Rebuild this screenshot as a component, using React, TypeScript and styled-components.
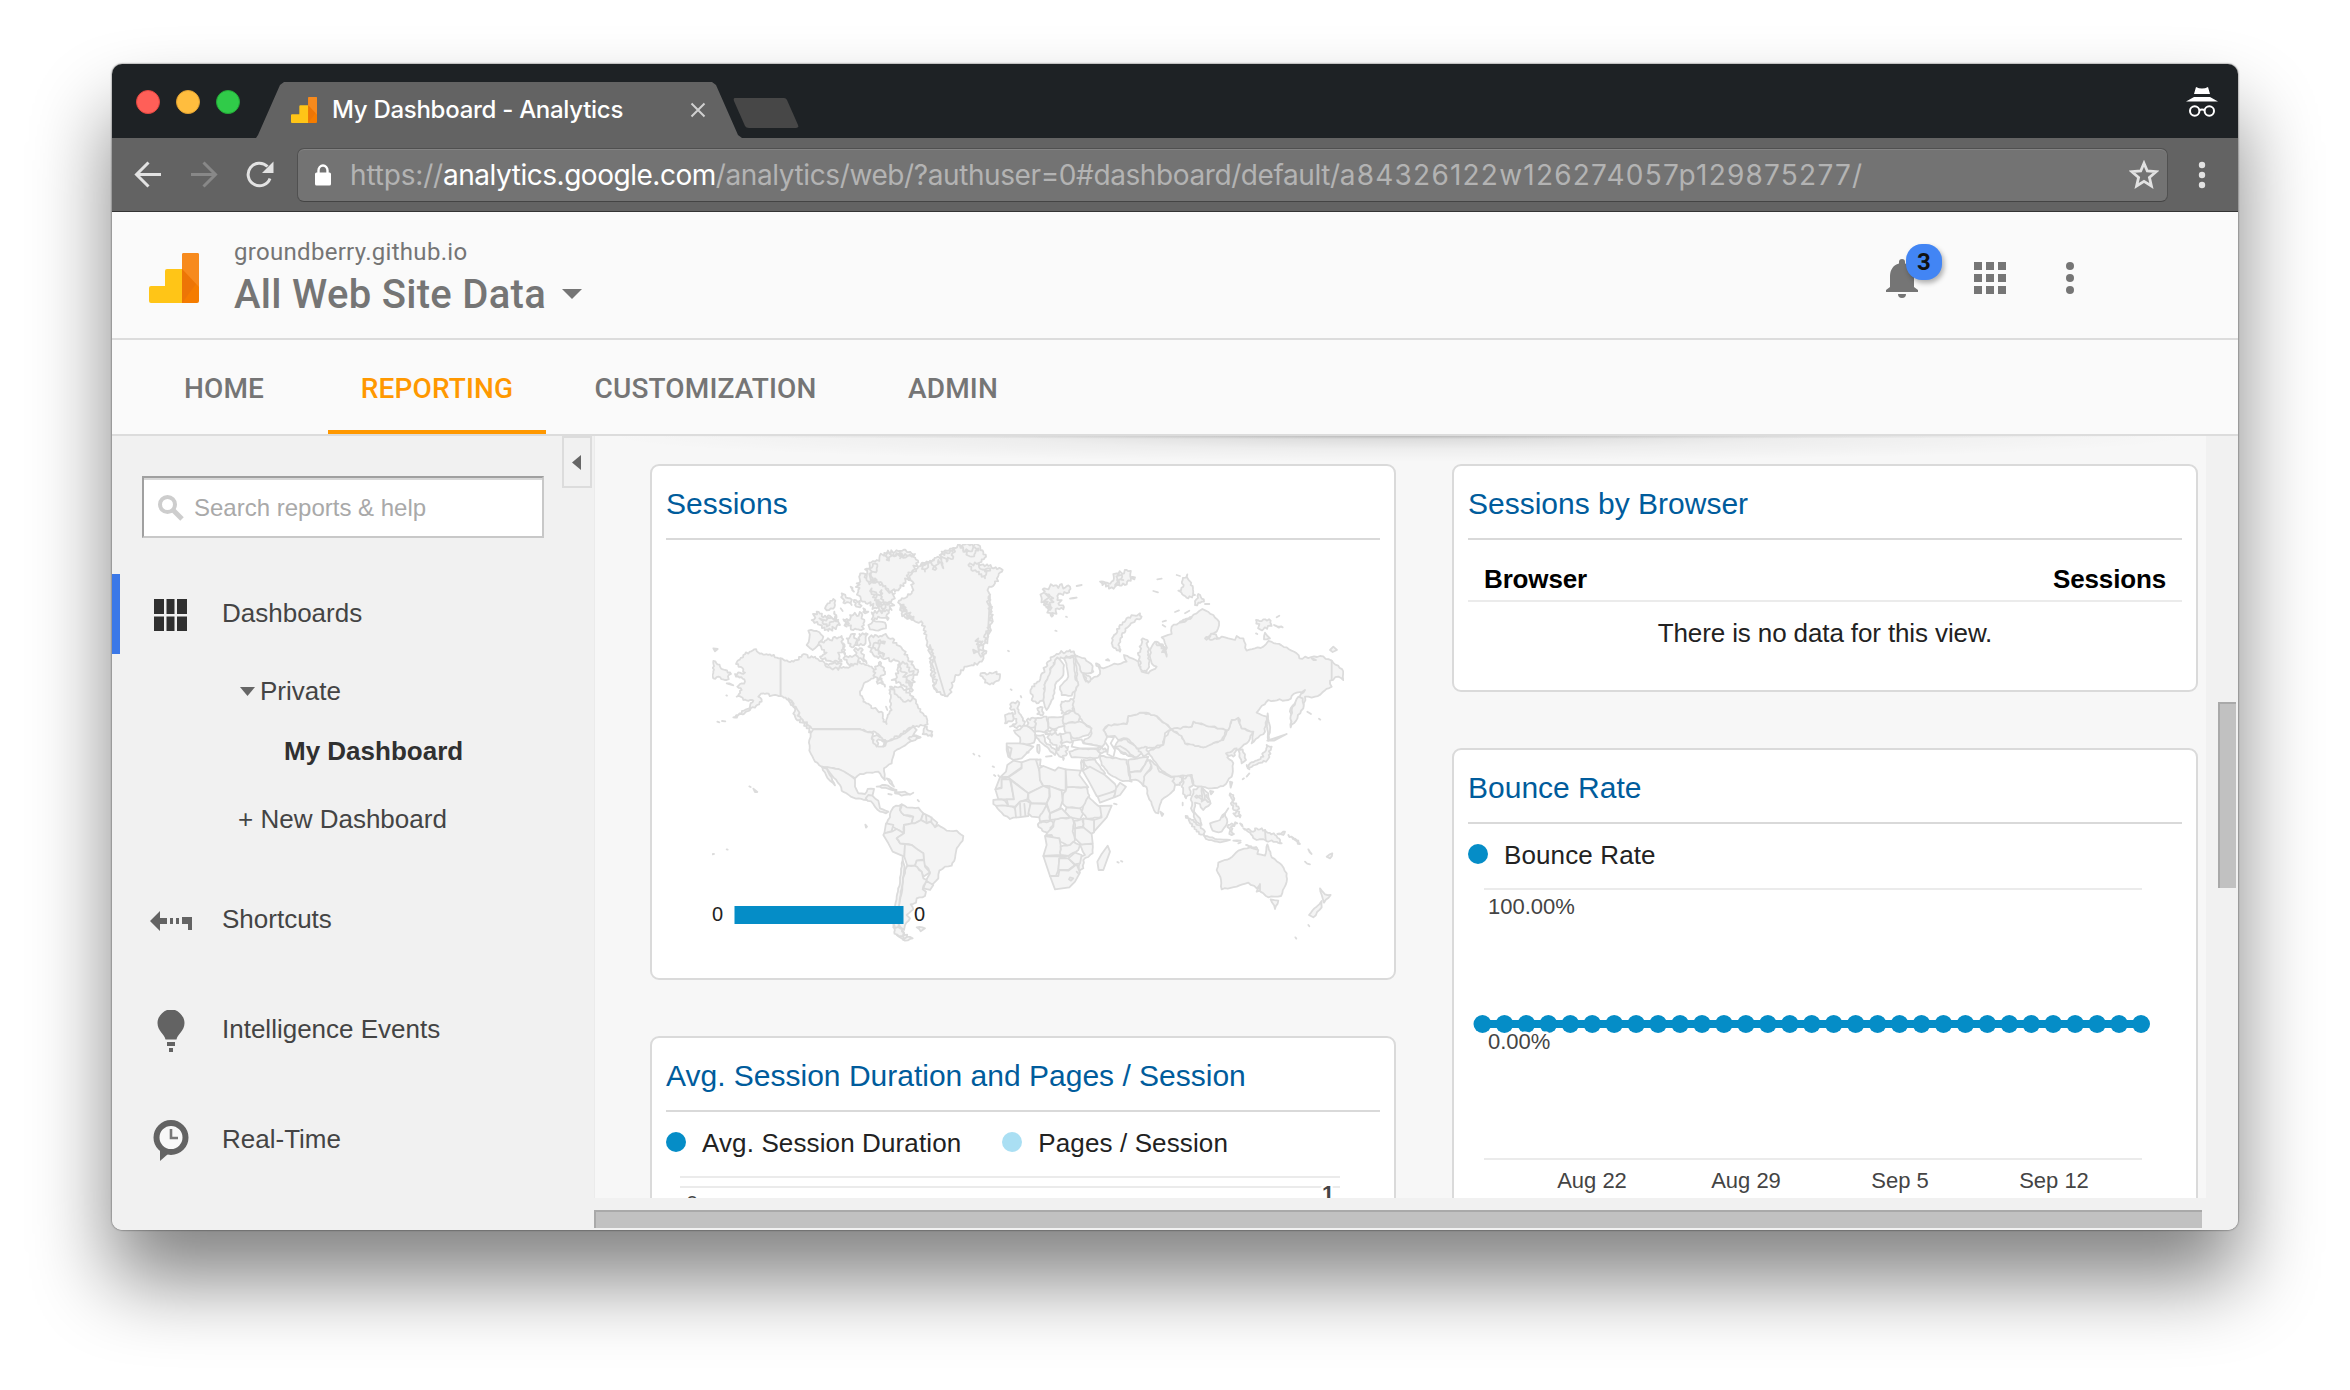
import React from 'react';
import styled, { createGlobalStyle } from 'styled-components';

const Global = createGlobalStyle`
  * { box-sizing: border-box; }
  html, body { margin: 0; padding: 0; background: #fff; }
  body { font-family: "Liberation Sans", Arial, sans-serif; overflow: hidden; }
  svg { display: block; flex: none; }
`;

const Desktop = styled.div`
  width: 2350px;
  height: 1390px;
  padding: 64px 112px;
  background: #fff;
`;

const BrowserWindow = styled.div`
  display: flex;
  flex-direction: column;
  width: 2126px;
  height: 1166px;
  border-radius: 10px;
  overflow: hidden;
  background: #fafafa;
  box-shadow: 0 0 2px rgba(0, 0, 0, 0.75), 0 50px 80px rgba(0, 0, 0, 0.49);
`;

/* ---------- browser chrome ---------- */

const TabStrip = styled.div`
  display: flex;
  height: 74px;
  flex: none;
  background: #1e2225;
  padding: 18px 20px 0 24px;
`;

const Lights = styled.div`
  display: flex;
  gap: 16px;
  padding-top: 8px;
  width: 120px;
`;

const Light = styled.span<{ $color: string; $edge: string }>`
  width: 24px;
  height: 24px;
  border-radius: 50%;
  background: ${(p) => p.$color};
  border: 1px solid ${(p) => p.$edge};
`;

const Tab = styled.div`
  display: flex;
  align-items: flex-start;
  width: 486px;
  height: 56px;
  padding: 15px 0 0 35px;
  background: #636363;
  clip-path: polygon(0 100%, 2px 53px, 24px 3px, 28px 0, 456px 0, 460px 3px, 482px 53px, 486px 100%);
`;

const TabTitle = styled.span`
  width: 373px;
  padding-left: 15px;
  font: 500 24px/26px Inter, sans-serif;
  letter-spacing: -0.28px;
  color: #fff;
  white-space: nowrap;
`;

const TabClose = styled.svg`
  margin-top: 5px;
`;

const NewTab = styled.svg`
  margin: 16px 0 0 -9px;
`;

const Incognito = styled.svg`
  margin: 4px 0 0 auto;
`;

const Toolbar = styled.div`
  display: flex;
  align-items: center;
  height: 74px;
  flex: none;
  padding: 0 32px 0 21px;
  background: #636363;
  border-bottom: 1px solid #333;
`;

const ToolIcon = styled.svg`
  margin-right: 26px;
`;

const AddressBar = styled.div`
  display: flex;
  align-items: center;
  width: 1871px;
  height: 54px;
  margin: 0 30px 0 -4px;
  padding: 0 8px 0 17px;
  border: 1px solid #505050;
  border-bottom-color: #444;
  border-radius: 7px;
  background: #737373;
  box-shadow: inset 0 1px #838383;
`;

const Url = styled.div`
  flex: 1;
  margin-left: 19px;
  font: 400 28px/34px Inter, sans-serif;
  letter-spacing: -0.17px;
  color: #b3b3b3;
  white-space: nowrap;
`;

const Host = styled.span`
  letter-spacing: -0.47px;
  color: #fff;
`;

const Path = styled.span`
  letter-spacing: -0.4px;
`;

const ViewId = styled.span`
  letter-spacing: 1.22px;
`;

/* ---------- analytics header ---------- */

const Header = styled.header`
  display: flex;
  align-items: flex-start;
  height: 128px;
  flex: none;
  padding: 41px 164px 0 37px;
  background: #fafafa;
  border-bottom: 2px solid #dcdcdc;
`;

const Property = styled.div`
  flex: 1;
  margin: -17px 0 0 35px;
  font-family: Roboto, sans-serif;
  color: #757575;
`;

const PropertyName = styled.div`
  font-size: 24px;
  line-height: 32px;
  letter-spacing: 0.3px;
`;

const ViewName = styled.div`
  display: flex;
  align-items: center;
  font-weight: 500;
  font-size: 40px;
  line-height: 54px;
  gap: 16px;
  letter-spacing: 0.3px;
`;

const HeaderActions = styled.div`
  display: flex;
  align-items: flex-start;
  padding-top: 6px;
`;

const BellButton = styled.div`
  position: relative;
  width: 88px;
`;

const Badge = styled.span`
  position: absolute;
  left: 20px;
  top: -15px;
  width: 36px;
  height: 36px;
  border-radius: 16px;
  background: #4285f4;
  box-shadow: 2px 3px 5px rgba(0, 0, 0, 0.3);
  font: 700 24px/36px Roboto, sans-serif;
  text-align: center;
  color: #111;
`;

const Nav = styled.nav`
  display: flex;
  height: 96px;
  flex: none;
  padding-left: 8px;
  background: #fafafa;
  border-bottom: 2px solid #dcdcdc;
`;

const NavTab = styled.a<{ $width: number; $active?: boolean }>`
  width: ${(p) => p.$width}px;
  height: 94px;
  padding-top: 30px;
  border-bottom: 4px solid ${(p) => (p.$active ? '#ff9800' : 'transparent')};
  color: ${(p) => (p.$active ? '#ff9800' : '#757575')};
  font: 500 28px/37px Roboto, sans-serif;
  letter-spacing: 0.15px;
  text-align: center;
`;

/* ---------- sidebar ---------- */

const Body = styled.div`
  display: flex;
  flex: 1;
  min-height: 0;
`;

const Sidebar = styled.aside`
  position: relative;
  width: 482px;
  background: #f1f1f1;
  padding-top: 40px;
`;

const Collapse = styled.div`
  position: absolute;
  right: 2px;
  top: 0;
  display: flex;
  align-items: center;
  justify-content: center;
  width: 30px;
  height: 52px;
  padding-right: 2px;
  border: 2px solid #dcdcdc;
`;

const Search = styled.div`
  display: flex;
  align-items: center;
  width: 402px;
  height: 62px;
  margin: 0 0 36px 30px;
  padding: 2px 0 0 14px;
  gap: 10px;
  background: #fff;
  border: 2px solid #c8c8c8;
  border-top-color: #a0a0a0;
  border-left-color: #a0a0a0;
  box-shadow: inset 0 2px #d8d8d8;
  font-size: 24px;
  color: #a9a9a9;
`;

const Item = styled.div<{ $height: number; $active?: boolean }>`
  display: flex;
  align-items: center;
  height: ${(p) => p.$height}px;
  padding-bottom: ${(p) => (p.$active ? 2 : 0)}px;
  border-left: 8px solid ${(p) => (p.$active ? '#3b78e7' : 'transparent')};
  font-size: 26px;
  line-height: 30px;
  color: #444;
`;

const ItemIcon = styled.span`
  display: flex;
  justify-content: center;
  width: 44px;
  margin: 4px 29px 0 29px;
`;

const SubItem = styled(Item)<{ $indent: number; $bold?: boolean }>`
  padding-left: ${(p) => p.$indent}px;
  font-weight: ${(p) => (p.$bold ? 700 : 400)};
  color: ${(p) => (p.$bold ? '#303030' : '#444')};
  gap: 5px;
`;

/* ---------- dashboard ---------- */

const Main = styled.main`
  display: grid;
  grid-template-columns: 1612px 32px;
  grid-template-rows: 762px 32px;
`;

const Viewport = styled.div`
  display: flex;
  gap: 56px;
  padding: 28px 8px 0 55px;
  border-left: 1px solid #ebebeb;
  overflow: hidden;
  background:
    radial-gradient(ellipse 780px 3px at 50% 0, rgba(0, 0, 0, 0.14), transparent) no-repeat,
    radial-gradient(ellipse 800px 26px at 50% 0, rgba(0, 0, 0, 0.13), rgba(0, 0, 0, 0.04) 50%, transparent) no-repeat,
    #f7f7f7;
`;

const Column = styled.div`
  display: flex;
  flex-direction: column;
  gap: 56px;
  width: 746px;
`;

const Card = styled.section<{ $height: number }>`
  flex: none;
  height: ${(p) => p.$height}px;
  padding: 0 14px;
  background: #fff;
  border: 2px solid #dadada;
  border-radius: 9px;
`;

const CardTitle = styled.h2`
  margin: 0;
  height: 74px;
  padding-top: 3px;
  border-bottom: 2px solid #d9d9d9;
  font-weight: 400;
  font-size: 30px;
  line-height: 70px;
  color: #005c9c;
`;

const TableHead = styled.div`
  display: flex;
  justify-content: space-between;
  height: 62px;
  padding: 24px 16px 0;
  border-bottom: 2px solid #ebebeb;
  font-weight: 700;
  font-size: 26px;
  line-height: 30px;
  letter-spacing: -0.15px;
  color: #000;
`;

const Empty = styled.div`
  padding-top: 16px;
  font-size: 26px;
  line-height: 30px;
  letter-spacing: -0.12px;
  text-align: center;
  color: #222;
`;

const Legend = styled.div`
  display: flex;
  align-items: center;
  height: 62px;
  gap: 41px;
  font-size: 26px;
  letter-spacing: 0.12px;
  color: #222;
`;

const LegendEntry = styled.span`
  display: flex;
  align-items: center;
  gap: 16px;
`;

const Dot = styled.i<{ $color: string }>`
  width: 20px;
  height: 20px;
  margin-top: -2px;
  border-radius: 50%;
  background: ${(p) => p.$color};
`;

const ScrollTrack = styled.div<{ $side: 'right' | 'bottom' }>`
  background: #f1f1f1;
  ${(p) => (p.$side === 'right' ? 'padding: 266px 2px 0 12px;' : 'padding: 12px 36px 2px 0; grid-column: 1 / -1;')}
`;

const ScrollThumb = styled.div<{ $height: number }>`
  height: ${(p) => p.$height}px;
  background: #c1c1c1;
  border-top: 2px solid #a9a9a9;
  border-left: 2px solid #a9a9a9;
`;

const Chart = styled.svg`
  font-family: "Liberation Sans", Arial, sans-serif;
`;

/* ---------- world map ---------- */

type Shape = [string, number?];

// Outlines in thirds of a pixel; the second value is the roughness of the coast.
const WEST: Shape[] = [
  ['162,358 185,370 210,373 242,385 242,498 215,497 190,490 175,500 185,515 150,540 105,563 100,562 150,530 160,512 150,510 130,510 122,500 110,500 125,480 112,470 135,455 133,448 108,440 105,432 135,428 130,418 108,402 130,375', 3],
  ['40,393 60,410 75,420 93,432 80,450 55,440 40,445', 3],
  ['40,355 53,357 45,364', 2], ['80,460 100,466 88,460'], ['52,575 58,577'], ['66,573 76,574'],
  ['242,385 265,395 290,390 312,372 330,383 345,380 375,400 410,410 450,410 470,395 490,400 515,410 530,440 510,450 490,465 480,490 490,515 520,535 548,548 550,575 560,582 563,555 575,540 570,510 568,480 590,475 612,485 620,510 640,500 655,535 680,565 683,583 650,588 625,595 600,615 560,635 545,632 530,610 510,605 480,597 340,597 325,590 295,560 285,535 265,510 242,498', 3],
  ['265,505 290,535 300,560 330,590 335,608 320,595 300,570 285,560 280,530', 5],
  ['340,598 480,598 520,610 515,625 535,650 548,650 560,635 600,620 640,590 650,600 640,615 660,622 630,635 600,655 583,665 575,700 552,715 555,750 545,740 535,725 510,728 480,732 465,745 440,730 415,717 365,710 345,695 328,662 328,630 332,610', 1.5],
  ['518,620 530,615 555,630 550,650 560,635 535,628 530,650 520,640', 3],
  ['365,710 415,717 440,730 465,748 465,770 475,790 495,792 503,777 522,777 517,797 500,810 460,803 425,782 420,765 395,735 380,715', 1.2],
  ['367,712 380,716 395,742 405,766 390,752 378,735', 2],
  ['497,805 505,795 517,797 535,812 540,835 565,845 558,850 540,845 520,822', 2],
  ['530,770 555,765 590,780 570,778', 2], ['585,785 615,785 630,793 605,797 585,790', 2], ['565,792 575,794'], ['640,788 630,794'],
  ['560,745 575,755 582,770 570,760', 2], ['653,810 657,814'],
  ['570,862 572,845 580,832 605,823 600,840 612,855 640,860 635,880 612,885 612,908 590,898 560,880', 1.5],
  ['605,823 620,832 655,833 670,850 663,870 645,880 635,880 640,860 612,855 600,840', 1.5],
  ['670,850 690,860 712,878 705,894 690,875 680,880 663,870', 1], ['678,857 680,878'], ['695,862 694,876'],
  ['558,880 580,885 575,903 553,910', 1],
  ['553,910 575,905 590,897 612,910 590,925 600,940 615,942 613,980 578,965 565,940 550,915', 1],
  ['612,885 635,880 645,880 663,870 680,880 692,875 705,892 715,885 740,902 770,902 790,918 788,932 770,955 765,985 755,1007 735,1010 718,1022 715,1045 695,1065 678,1052 690,1030 685,1015 672,1005 670,970 655,960 635,945 615,942 600,940 590,925 612,910', 1.2],
  ['615,942 635,945 655,960 670,970 672,988 650,992 645,1007 622,1007 613,980', 1],
  ['650,992 672,990 675,1010 690,1027 670,1040 665,1025 645,1007', 1],
  ['678,1052 700,1065 690,1080 670,1075', 1],
  ['622,1007 645,1007 665,1025 670,1045 680,1050 668,1078 678,1085 675,1098 650,1105 648,1118 632,1123 640,1138 620,1155 630,1165 615,1185 612,1200 600,1190 590,1170 598,1120 607,1070 615,1020', 1.5],
  ['608,982 614,1010 608,1060 598,1120 592,1170 600,1195 620,1220 638,1225 615,1232 590,1215 580,1185 590,1100 600,1060 605,1000', 1.5],
  ['583,1185 600,1195 620,1222 610,1230 592,1214', 6],
  ['650,1192 675,1195 662,1204', 2],
  ['675,588 680,597 697,605 695,620 680,612 668,612', 4], ['625,625 645,618 662,622 640,632', 3],
  ['148,769 152,771'], ['160,776 172,786 165,786', 1], ['496,884 501,890 498,893'], ['35,973 42,972'], ['80,958 83,959'], ['79,496 81,497'],
  ['495,118 530,90 560,70 600,63 645,72 655,97 640,120 610,160 585,185 560,175 545,158 510,155 500,140', 7],
  ['510,115 525,100 530,115 510,140 530,150 515,150', 6], ['560,72 560,90 600,68 600,85 640,75', 5],
  ['470,160 490,130 505,155 540,165 560,180 585,190 575,240 530,235 495,215 475,185', 7],
  ['515,175 530,200 545,180 550,210 530,225 570,215 545,235', 7],
  ['515,247 565,243 563,270 540,263 515,268', 5], ['505,285 520,272 555,278 558,295 535,302 510,298', 2],
  ['325,302 350,303 370,320 355,345 338,360 320,345 328,325', 2.5],
  ['355,345 375,332 425,318 430,345 418,375 425,395 395,395 360,380 380,368', 5],
  ['375,405 400,400 425,402 415,420', 4],
  ['350,245 370,262 395,262 420,285 385,303 360,285 335,270', 5], ['358,265 380,290 400,275 415,270', 5],
  ['380,225 400,207 405,225 388,240 375,235', 4], ['425,190 450,205 455,225 430,218', 4], ['462,210 480,212 480,232 465,225', 4],
  ['452,170 462,185', 3], ['403,245 408,268', 3], ['422,235 428,243'],
  ['450,255 485,250 490,280 485,300 460,300 445,280', 5], ['430,268 445,270 440,290', 4], ['490,235 505,245 495,250', 4],
  ['440,325 465,312 470,345 450,348', 4], ['478,312 503,312 492,345 472,345', 3], ['462,360 485,355 490,385 500,400 475,385', 4], ['430,340 435,375', 3],
  ['430,385 465,375 480,395 450,408', 4],
  ['510,320 550,315 578,325 590,345 612,362 625,385 655,425 640,445 635,485 610,465 575,450 595,430 600,400 560,385 525,380 505,350', 5],
  ['520,345 540,330 555,335 535,355 550,380', 6],
  ['600,405 620,400 640,430 620,450 632,470', 7],
  ['520,425 540,395 555,425 532,450', 5], ['530,455 545,445 555,470', 4], ['570,470 600,470 630,490 635,510 610,515', 4], ['558,530 562,540'],
  ['597,212 635,190 638,155 625,150 655,110 690,92 720,92 725,65 780,45 835,45 858,80 835,100 865,108 908,120 885,160 865,175 870,220 875,260 865,320 850,350 858,370 845,395 800,410 765,440 750,490 735,498 708,480 695,440 690,370 680,330 668,280 640,270 620,265 600,240', 4],
  ['690,345 700,370 695,400 705,440 710,480 735,495', 7], ['870,200 868,240 875,280 858,310 862,340', 7], ['602,225 620,240 605,250 640,268', 6],
  ['835,325 850,345 822,370 850,375', 9], ['725,70 760,55 760,80 740,95', 7], ['780,48 790,65 835,55 815,80', 5], ['662,105 675,125 690,95 705,120 715,90 730,115 725,80', 4], ['805,105 835,100 855,125 870,115 855,145', 5],
  ['842,430 860,434 890,425 900,440 880,462 855,458 850,445', 4],
  ['924,362 927,364'], ['932,478 935,480'], ['962,498 964,502'],
  ['935,518 958,518 952,535 965,560 975,575 970,588 945,592 930,590 950,578 940,560 945,545 930,535', 4], ['915,555 938,548 940,570 915,580', 3],
  ['920,640 965,640 1000,650 985,665 965,685 940,690 925,680 920,660', 1], ['922,650 935,655 930,680'],
  ['820,671 823,674'], ['837,677 839,679'], ['878,709 882,711'], ['882,735 886,738'], ['895,736 897,739'],
  ['940,692 965,697 965,712 925,740 900,742 918,725 922,705', 1], ['900,742 925,742 905,748 905,772 886,778', 1],
  ['886,778 905,774 905,748 930,748 942,808 895,808', 0.8],
  ['880,810 895,808 915,812 925,828 895,830 880,822', 2], ['888,828 925,828 945,835 950,862 930,867 905,848', 2], ['953,835 955,860'], ['972,832 974,858'],
];

const EAST: Shape[] = [
  ['-18,602 0,598 10,587 28,592 45,608 42,638 30,642 0,640 0,622', 2],
  ['5,697 30,688 52,688 58,715 60,750 70,768 25,790 -35,742 5,715', 1],
  ['-28,750 25,790 22,808 0,815 -15,830 -35,828 -40,808 -18,808', 1],
  ['-15,833 0,815 20,812 32,820 25,858 -5,862 -12,862', 1], ['0,820 2,858'], ['13,822 16,856'],
  ['48,690 62,688 60,706 68,710 58,722', 1],
  ['58,715 70,708 105,722 115,712 137,718 137,783 125,780 85,768 70,768 60,750', 1],
  ['137,718 182,722 178,735 205,772 140,772', 1],
  ['70,768 88,775 88,800 80,820 35,820 25,808 25,790', 1],
  ['88,768 125,782 128,812 120,835 90,850 80,820 90,800', 1],
  ['140,772 200,772 208,797 195,825 180,835 140,832 128,820 130,790 137,783', 1.5],
  ['140,832 180,835 190,850 180,868 150,862 135,845', 1],
  ['90,850 125,835 150,862 110,868 90,870', 1],
  ['32,820 80,822 75,845 58,862 35,860 25,850', 1],
  ['80,825 90,850 90,872 60,875 58,862', 1.5],
  ['58,878 90,872 100,880 85,915 72,905 55,890', 3],
  ['105,868 155,862 162,880 158,905 165,930 150,950 120,935 118,925 100,925 95,915 78,915 100,890', 1.5],
  ['205,800 240,830 258,838 240,862 200,865 185,845 195,820', 1.5],
  ['240,828 275,827 260,862 220,907 222,870 245,862', 1],
  ['190,865 222,870 222,907 212,912 190,892', 1], ['162,872 190,866 188,890 165,895', 2],
  ['165,895 190,892 215,912 218,940 185,945 165,925', 1],
  ['75,918 100,922 118,925 122,945 122,975 70,978 80,945', 1],
  ['122,950 150,945 160,935 180,945 175,960 145,978 122,975', 2],
  ['180,945 218,942 218,970 190,990 190,1015 175,1025 178,985 195,975 185,955', 1.5],
  ['70,978 140,980 118,985 115,1020 107,1040 90,1038', 1],
  ['118,985 145,985 165,1005 145,1020 115,1020', 1], ['145,985 165,968 185,975 180,1000 165,1003', 1],
  ['90,1038 115,1038 118,1020 145,1022 170,1003 180,1028 165,1055 148,1072 105,1078', 1],
  ['150,1042 160,1045 153,1052 147,1048', 2], ['170,1025 174,1029'],
  ['263,947 270,965 250,1020 236,1020 232,995 245,972', 1], ['292,996 296,998'], ['303,993 307,995'], ['282,821 290,823'],
  ['148,665 180,655 230,658 242,670 235,683 185,683 155,682', 1.5], ['230,655 255,655 262,665 245,670', 3],
  ['190,690 225,688 235,703 255,730 240,732 195,705', 1.5], ['185,690 192,712 185,722', 2],
  ['240,678 270,682 320,690 325,725 335,755 300,750 265,730 245,705', 1.5],
  ['188,722 210,710 255,735 285,762 292,778 240,805 230,798 210,760', 1],
  ['233,800 290,782 280,803 240,818', 1], ['288,775 300,758 318,770 300,795 283,802', 1],
  ['325,690 385,680 375,705 360,725 328,725', 2], ['328,728 362,725 385,690 400,702 375,740 385,770 370,768 355,752 330,750', 2],
  ['390,690 412,708 418,725 460,742 492,735 485,757 465,765 462,780 425,810 415,850 407,848 385,800 380,772 370,765 372,740 395,715', 1.5],
  ['421,845 430,852 426,858', 1], ['460,738 485,742 480,765 462,758', 4], ['425,725 455,742', 2],
  ['250,600 265,585 320,582 325,558 370,548 410,558 455,598 435,610 430,645 380,655 350,655 320,625 295,630 285,618 262,620', 2],
  ['295,632 320,628 350,655 375,662 350,682 310,672 285,650', 2], ['350,655 375,650 390,665 370,680', 4], ['278,650 300,648 325,665 345,685', 2],
  ['435,620 455,598 485,618 495,640 550,652 610,630 620,605 635,570 655,563 665,595 700,605 680,640 650,660 622,682 640,700 635,740 610,768 575,775 545,770 520,765 515,735 480,738 455,740 420,715 400,690 385,665 430,645', 2],
  ['455,598 475,588 515,590 520,575 575,590 620,600 605,630 550,652 495,640 485,618', 1.5],
  ['165,385 212,405 220,425 190,432 198,455 240,432 235,405 250,415 275,405 320,395 312,375 355,395 365,425 385,430 410,410 395,400 390,360 405,335 430,350 440,380 437,345 425,322 455,312 455,290 500,270 530,250 547,237 580,255 597,275 590,305 560,325 615,322 645,330 650,318 670,325 680,362 730,350 745,333 800,352 830,370 838,385 900,378 935,392 970,425 970,450 955,440 930,452 935,470 885,500 855,500 850,530 815,580 812,535 855,480 830,488 805,510 745,510 710,548 740,560 735,605 695,640 700,605 665,595 655,563 635,570 625,600 575,590 520,575 515,590 455,598 410,558 370,548 325,558 320,582 265,585 250,600 262,622 247,650 190,637 215,610 210,590 170,560 155,520 175,465', 2.5],
  ['355,375 368,325 382,330 388,395 380,425 365,420', 3], ['190,432 210,440 205,458', 4], ['935,392 935,450'],
  ['555,325 580,312 595,325', 4], ['410,335 430,350 440,375', 5], ['875,385 888,390', 4],
  ['743,550 750,600 745,632 741,590', 1.5], ['742,632 762,632 800,612'], ['835,500 848,505 850,535 812,592 815,540', 2],
  ['740,645 755,650 742,690 705,705 685,712 690,700 722,687 735,665', 3], ['680,705 688,718', 3],
  ['655,660 668,658 678,690 665,700 658,680', 2], ['650,655 635,665 618,670 640,680', 3],
  ['490,745 515,735 520,765 508,772 512,790 498,805 485,770', 3],
  ['520,778 545,770 565,790 572,820 550,840 540,822 525,818 522,845 540,865 545,885 525,868 513,835 515,800', 2.5], ['525,800 560,795 570,815', 3], ['545,775 555,800 545,815', 2],
  ['497,858 520,870 555,905 553,918 530,905', 3], ['553,918 600,928 630,930 600,937 558,927', 2], ['640,932 662,932', 2], ['655,940 662,937'],
  ['570,880 600,870 615,850 622,875 605,905 578,902', 2.5], ['625,885 652,880 632,892 642,912 628,912', 4], ['660,880 668,890', 3],
  ['630,790 640,795 638,815 655,830 650,845 635,825', 4], ['640,850 658,845 660,862', 4], ['608,862 625,835'],
  ['670,895 700,905 705,895 735,900 765,915 785,940 750,933 735,930 710,930 690,908', 3], ['735,900 737,930'], ['772,912 795,905 790,915', 3], ['805,915 835,932 840,942', 3],
  ['630,755 637,757 632,773', 1], ['570,783 580,785 573,793', 2], ['488,818 488,826'], ['668,748 672,745'], ['680,740 688,730'],
  ['595,998 630,985 655,962 690,952 715,960 712,972 735,977 742,943 755,982 785,1005 800,1030 800,1055 783,1098 745,1102 730,1090 715,1080 718,1068 710,1075 685,1058 650,1070 605,1078 603,1050 590,1020', 1.5],
  ['678,945 712,955', 3], ['710,1085 720,1062 720,1082'],
  ['752,1108 775,1112 765,1137', 2], ['900,1075 915,1093 932,1095 912,1118 908,1105', 1.5], ['905,1113 905,1132 880,1162 867,1155 890,1130', 1.5],
  ['865,1185 868,1189'], ['826,1222 829,1226'], ['865,958 875,972', 2], ['855,995 870,1003', 2], ['920,980 930,985 937,970', 2], ['862,545 873,552'], ['897,566 901,569'],
  ['35,475 60,450 80,400 110,372 150,360 172,378 150,380 122,382 97,410 77,455 72,512 50,520 35,510', 4],
  ['112,382 132,405 130,435 105,465 100,505 80,540 70,510 77,455 97,410', 2], ['132,385 160,380 165,440 175,465 155,497 125,495 120,470 145,440 140,410', 2],
  ['165,378 195,385 218,408 215,428 185,428', 2],
  ['52,535 68,532 68,555 52,552', 5], ['45,565 80,560 85,595 75,608 45,605', 2], ['85,562 130,560 132,588 100,598 85,590', 1.5],
  ['130,580 180,575 215,595 205,615 160,625 135,605', 2], ['130,555 160,542 180,560 175,575 130,580', 2], ['125,515 158,508 160,542 125,550', 3],
  ['120,612 150,608 158,635 125,640', 2], ['45,615 70,615 75,635 110,662 105,675 80,650 60,635', 2], ['80,605 120,610 125,642 115,655 90,630', 5], ['110,655 145,650 130,690 115,675', 5],
  ['20,570 45,565 45,590 25,590', 3], ['75,605 110,600 95,615', 3], ['52,645 58,645 57,670 52,665', 1.5], ['78,680 95,678'], ['20,667 26,668'],
  ['278,350 280,320 300,285 325,262 360,250 365,260 330,285 305,315 295,345 300,365', 3],
  ['68,178 100,168 150,170 140,190 112,198 130,238 112,235 95,260 80,230 65,210', 6], ['75,190 100,205 90,240', 7], ['170,168 185,165', 2], ['150,206 170,203', 2], ['138,260 141,261'], ['106,302 110,303'],
  ['240,155 280,152 290,130 320,120 345,142 315,165 275,172', 7], ['295,130 310,150 285,165', 7], ['412,148 425,146', 2], ['400,183 414,187', 2],
  ['470,135 480,138', 2], ['488,150 502,133 512,165 525,195 505,205 475,182 490,170', 3.5], ['535,192 552,215 525,225', 3], ['555,222 568,222', 2],
  ['465,246 477,241', 2], ['495,250 508,242', 2], ['428,275 438,272', 2], ['428,285 436,290', 2], ['480,275 515,262', 4],
  ['708,270 730,268 752,272 755,288 720,298', 4], ['762,285 788,292', 4], ['735,308 750,325 732,328', 2], ['770,262 778,257', 1], ['708,310 712,312'],
  ['930,360 940,350 951,360 938,366', 2], ['228,400 240,410', 4], ['258,390 268,392', 3],
];

function outline([points, rough = 0]: Shape, index: number): string {
  const p = points.split(' ').map((s) => s.split(',').map(Number));
  let seed = index * 7919 + 13;
  const random = () => {
    seed = (seed * 16807) % 2147483647;
    return seed / 2147483647 - 0.5;
  };
  const out: string[] = [];
  p.forEach(([x, y], i) => {
    out.push(`${x} ${y}`);
    const next = p[(i + 1) % p.length];
    const dx = next[0] - x;
    const dy = next[1] - y;
    const length = Math.hypot(dx, dy);
    if (rough < 1.1 || length > 95) return;
    const step = rough >= 3 ? 5 : 8;
    const n = Math.floor(length / step);
    for (let k = 1; k < n; k++) {
      const off = random() * rough * 2.5;
      out.push(`${(x + (dx * k) / n - (dy / length) * off).toFixed(1)} ${(y + (dy * k) / n + (dx / length) * off).toFixed(1)}`);
    }
  });
  return `M${out.join('L')}Z`;
}

function WorldMap() {
  return (
    <Chart width="714" height="430" viewBox="0 0 714 430">
      <clipPath id="map-area">
        <rect x="46" y="4" width="632" height="400" />
      </clipPath>
      <g clipPath="url(#map-area)">
        <g transform="translate(34 -10) scale(0.33333)" fill="#f4f4f4" stroke="#dcdcdc" strokeWidth="5.4" strokeLinejoin="round">
          {WEST.map((s, i) => <path key={i} d={outline(s, i)} />)}
          <g transform="translate(960 0)">
            {EAST.map((s, i) => <path key={i} d={outline(s, i + 300)} />)}
            <path d="M160 632L185 628L190 640L245 650L230 655L180 655L155 650ZM262 620L282 622L272 640L285 660L280 682L262 672L265 650L255 635Z" fill="#fff" />
          </g>
        </g>
      </g>
      <rect x="68.5" y="366" width="169" height="18" fill="#058dc7" />
      <g fontSize="20" fill="#222">
        <text x="46" y="381">0</text>
        <text x="248" y="381">0</text>
      </g>
    </Chart>
  );
}

function BounceChart() {
  const xs = Array.from({ length: 31 }, (_, i) => 14.5 + i * 21.95);
  return (
    <Chart width="714" height="350" viewBox="0 0 714 350">
      <path d="M16 3H674M16 273H674" stroke="#ebebeb" strokeWidth="2" />
      <path d="M14 138H674" stroke="#058dc7" strokeWidth="8" />
      {xs.map((x) => <circle key={x} cx={x} cy="138" r="9" fill="#058dc7" />)}
      <g fontSize="22" fill="#444" stroke="#fff" strokeWidth="5" strokeLinejoin="round" paintOrder="stroke">
        <text x="20" y="28">100.00%</text>
        <text x="20" y="163">0.00%</text>
        <g textAnchor="middle">
          <text x="124" y="302">Aug 22</text>
          <text x="278" y="302">Aug 29</text>
          <text x="432" y="302">Sep 5</text>
          <text x="586" y="302">Sep 12</text>
        </g>
      </g>
    </Chart>
  );
}

function DurationChart() {
  return (
    <Chart width="714" height="60" viewBox="0 0 714 60">
      <path d="M14 3H674M14 13H674" stroke="#ebebeb" strokeWidth="2" />
      <g fontSize="22" fill="#444" stroke="#fff" strokeWidth="5" paintOrder="stroke">
        <text x="20" y="37">0</text>
        <text x="656" y="27" fontWeight="700">1</text>
      </g>
    </Chart>
  );
}

function AnalyticsLogo({ size }: { size: number }) {
  return (
    <svg width={size} height={size} viewBox="0 0 50 50">
      <path d="M2 33H16V18Q16 16 18 16H34V50H2Q0 50 0 48V35Q0 33 2 33Z" fill="#ffc517" />
      <path d="M35 0H48Q50 0 50 2V48Q50 50 48 50H33V2Q33 0 35 0Z" fill="#f57c00" />
      <path d="M35 0H48Q50 0 50 2V34L33 16V2Q33 0 35 0Z" fill="#f78a1d" />
      <path d="M33 16L47 31L33 50Z" fill="#e8710a" opacity=".6" />
    </svg>
  );
}

export default function App() {
  return (
    <Desktop>
      <Global />
      <BrowserWindow>
        <TabStrip>
          <Lights>
            <Light $color="#ff5f58" $edge="#e2463f" />
            <Light $color="#ffbd3e" $edge="#e0a030" />
            <Light $color="#30cb49" $edge="#22a836" />
          </Lights>
          <Tab>
            <AnalyticsLogo size={26} />
            <TabTitle>My Dashboard - Analytics</TabTitle>
            <TabClose width="16" height="16" viewBox="0 0 16 16" stroke="#d0d0d0" strokeWidth="2">
              <path d="M1.5 1.5L14.5 14.5M14.5 1.5L1.5 14.5" />
            </TabClose>
          </Tab>
          <NewTab width="66" height="30" viewBox="0 0 66 30">
            <path d="M2 0H51Q53 0 54 2L65 27Q66 30 63 30H16Q13 30 12 28L1 3Q0 0 2 0Z" fill="#474747" />
          </NewTab>
          <Incognito width="32" height="32" viewBox="0 0 32 32" fill="#fff">
            <path d="M10 1Q16 4 22 1L24 8H8ZM8 11H24L32 15.5H0Z" />
            <g fill="none" stroke="#fff" strokeWidth="2">
              <circle cx="8.7" cy="25" r="4.7" />
              <circle cx="23.3" cy="25" r="4.7" />
              <path d="M13 24.5Q16 22.5 19 24.5" />
            </g>
          </Incognito>
        </TabStrip>

        <Toolbar>
          <ToolIcon width="30" height="30" viewBox="0 0 30 30" fill="none" stroke="#e2e2e2" strokeWidth="3">
            <path d="M28 14.500H3.500M15.500 2.500L3.500 14.500L15.500 26.500" />
          </ToolIcon>
          <ToolIcon width="30" height="30" viewBox="0 0 30 30" fill="none" stroke="#888" strokeWidth="3">
            <path d="M2 14.500H26.500M14.500 2.500L26.500 14.500L14.500 26.500" />
          </ToolIcon>
          <ToolIcon width="30" height="30" viewBox="0 0 30 30" fill="none" stroke="#e2e2e2" strokeWidth="3">
            <path d="M25 18.500A11.300 11.300 0 1 1 22.500 6.500" />
            <path d="M28.500 1.500V13H17Z" fill="#e2e2e2" stroke="none" />
          </ToolIcon>
          <AddressBar>
            <svg width="16" height="22" viewBox="0 0 16 22">
              <rect y="8.5" width="16" height="13" rx="1.5" fill="#fff" />
              <path d="M3.5 9V6.5A4.5 5 0 0 1 12.5 6.5V9" fill="none" stroke="#fff" strokeWidth="2.4" />
            </svg>
            <Url>
              https://<Host>analytics.google.com</Host>
              <Path>/analytics/web/?authuser=0#dashboard/default/</Path>
              <ViewId>a84326122w126274057p129875277/</ViewId>
            </Url>
            <svg width="30" height="30" viewBox="0 0 30 30" fill="none" stroke="#e2e2e2" strokeWidth="2.8">
              <path d="M15 3.200L18.300 11L27 11.700L20.400 17.400L22.400 26L15 21.400L7.600 26L9.600 17.400L3 11.700L11.700 11Z" />
            </svg>
          </AddressBar>
          <svg width="8" height="28" viewBox="0 0 8 28" fill="#e2e2e2">
            <circle cx="4" cy="4" r="3.2" />
            <circle cx="4" cy="14" r="3.2" />
            <circle cx="4" cy="24" r="3.2" />
          </svg>
        </Toolbar>

        <Header>
          <AnalyticsLogo size={50} />
          <Property>
            <PropertyName>groundberry.github.io</PropertyName>
            <ViewName>
              All Web Site Data
              <svg width="20" height="12" viewBox="0 0 20 12"><path d="M0 0H20L10 10Z" fill="#757575" /></svg>
            </ViewName>
          </Property>
          <HeaderActions>
            <BellButton>
              <svg width="32" height="39" viewBox="0 0 32 39" fill="#757575">
                <path d="M16 0A3 3 0 0 1 19 3V4.4C25 6 28 11 28 17V28L32 31V33H0V31L4 28V17C4 11 7 6 13 4.4V3A3 3 0 0 1 16 0ZM12 35H20A4 4 0 0 1 12 35Z" />
              </svg>
              <Badge>3</Badge>
            </BellButton>
            <svg width="92" height="38" viewBox="0 -3 92 38" fill="#757575">
              {[0, 12, 24].map((y) => [0, 12, 24].map((x) => <rect key={`${x}-${y}`} x={x} y={y} width="8" height="8" />))}
            </svg>
            <svg width="8" height="38" viewBox="0 -3 8 38" fill="#757575">
              <circle cx="4" cy="4" r="4" />
              <circle cx="4" cy="16" r="4" />
              <circle cx="4" cy="28" r="4" />
            </svg>
          </HeaderActions>
        </Header>

        <Nav>
          <NavTab $width={208}>HOME</NavTab>
          <NavTab $width={218} $active>REPORTING</NavTab>
          <NavTab $width={319}>CUSTOMIZATION</NavTab>
          <NavTab $width={176}>ADMIN</NavTab>
        </Nav>

        <Body>
          <Sidebar>
            <Collapse>
              <svg width="9" height="15" viewBox="0 0 9 15"><path d="M9 0V15L0 7.5Z" fill="#666" /></svg>
            </Collapse>
            <Search>
              <svg width="26" height="26" viewBox="0 0 26 26" fill="none" stroke="#cdcdcd">
                <circle cx="9.5" cy="9.5" r="7.5" strokeWidth="4" />
                <path d="M15.5 15.5L24 24" strokeWidth="5" />
              </svg>
              Search reports &amp; help
            </Search>
            <Item $height={80} $active>
              <ItemIcon>
                <svg width="34" height="32" viewBox="0 0 34 32" fill="#303030">
                  <path d="M0 0H10V15H0ZM12.5 0H20.5V15H12.5ZM23 0H33V15H23ZM0 17.5H10V32H0ZM12.5 17.5H20.5V32H12.5ZM23 17.5H33V32H23Z" />
                </svg>
              </ItemIcon>
              Dashboards
            </Item>
            <SubItem $height={74} $indent={120}>
              <svg width="15" height="9" viewBox="0 0 15 9"><path d="M0 0H15L7.5 9Z" fill="#666" /></svg>
              Private
            </SubItem>
            <SubItem $height={46} $indent={164} $bold>My Dashboard</SubItem>
            <SubItem $height={90} $indent={118}>+ New Dashboard</SubItem>
            <Item $height={110}>
              <ItemIcon>
                <svg width="42" height="20" viewBox="0 0 42 20" fill="#636363">
                  <path d="M0 10L10 0V7H17V13H10V20ZM20 7H23V13H20ZM26 7H29V13H26ZM32 6H42V19H38V13H32Z" />
                </svg>
              </ItemIcon>
              Shortcuts
            </Item>
            <Item $height={110}>
              <ItemIcon>
                <svg width="28" height="42" viewBox="0 0 28 42" fill="#636363">
                  <path d="M10 0H18C23 2 27.500 7 27.500 13C27.500 21 20.500 24 19.500 29.500H8.500C7.500 24 .5 21 .5 13C.5 7 5 2 10 0ZM10 32H18V36H10ZM12 38H16V42H12Z" />
                </svg>
              </ItemIcon>
              Intelligence Events
            </Item>
            <Item $height={110}>
              <ItemIcon>
                <svg width="36" height="42" viewBox="0 0 36 42">
                  <circle cx="18" cy="17.500" r="14.500" fill="#f8f8f8" stroke="#636363" strokeWidth="6" />
                  <path d="M7 29V41L15 34Z" fill="#636363" />
                  <path d="M18 9V18H25" fill="none" stroke="#777" strokeWidth="2.600" />
                </svg>
              </ItemIcon>
              Real-Time
            </Item>
          </Sidebar>

          <Main>
            <Viewport>
              <Column>
                <Card $height={516}>
                  <CardTitle>Sessions</CardTitle>
                  <WorldMap />
                </Card>
                <Card $height={516}>
                  <CardTitle>Avg. Session Duration and Pages / Session</CardTitle>
                  <Legend>
                    <LegendEntry><Dot $color="#058dc7" />Avg. Session Duration</LegendEntry>
                    <LegendEntry><Dot $color="#aadff3" />Pages / Session</LegendEntry>
                  </Legend>
                  <DurationChart />
                </Card>
              </Column>
              <Column>
                <Card $height={228}>
                  <CardTitle>Sessions by Browser</CardTitle>
                  <TableHead>
                    <span>Browser</span>
                    <span>Sessions</span>
                  </TableHead>
                  <Empty>There is no data for this view.</Empty>
                </Card>
                <Card $height={516}>
                  <CardTitle>Bounce Rate</CardTitle>
                  <Legend>
                    <LegendEntry><Dot $color="#058dc7" />Bounce Rate</LegendEntry>
                  </Legend>
                  <BounceChart />
                </Card>
              </Column>
            </Viewport>
            <ScrollTrack $side="right"><ScrollThumb $height={186} /></ScrollTrack>
            <ScrollTrack $side="bottom"><ScrollThumb $height={18} /></ScrollTrack>
          </Main>
        </Body>
      </BrowserWindow>
    </Desktop>
  );
}
